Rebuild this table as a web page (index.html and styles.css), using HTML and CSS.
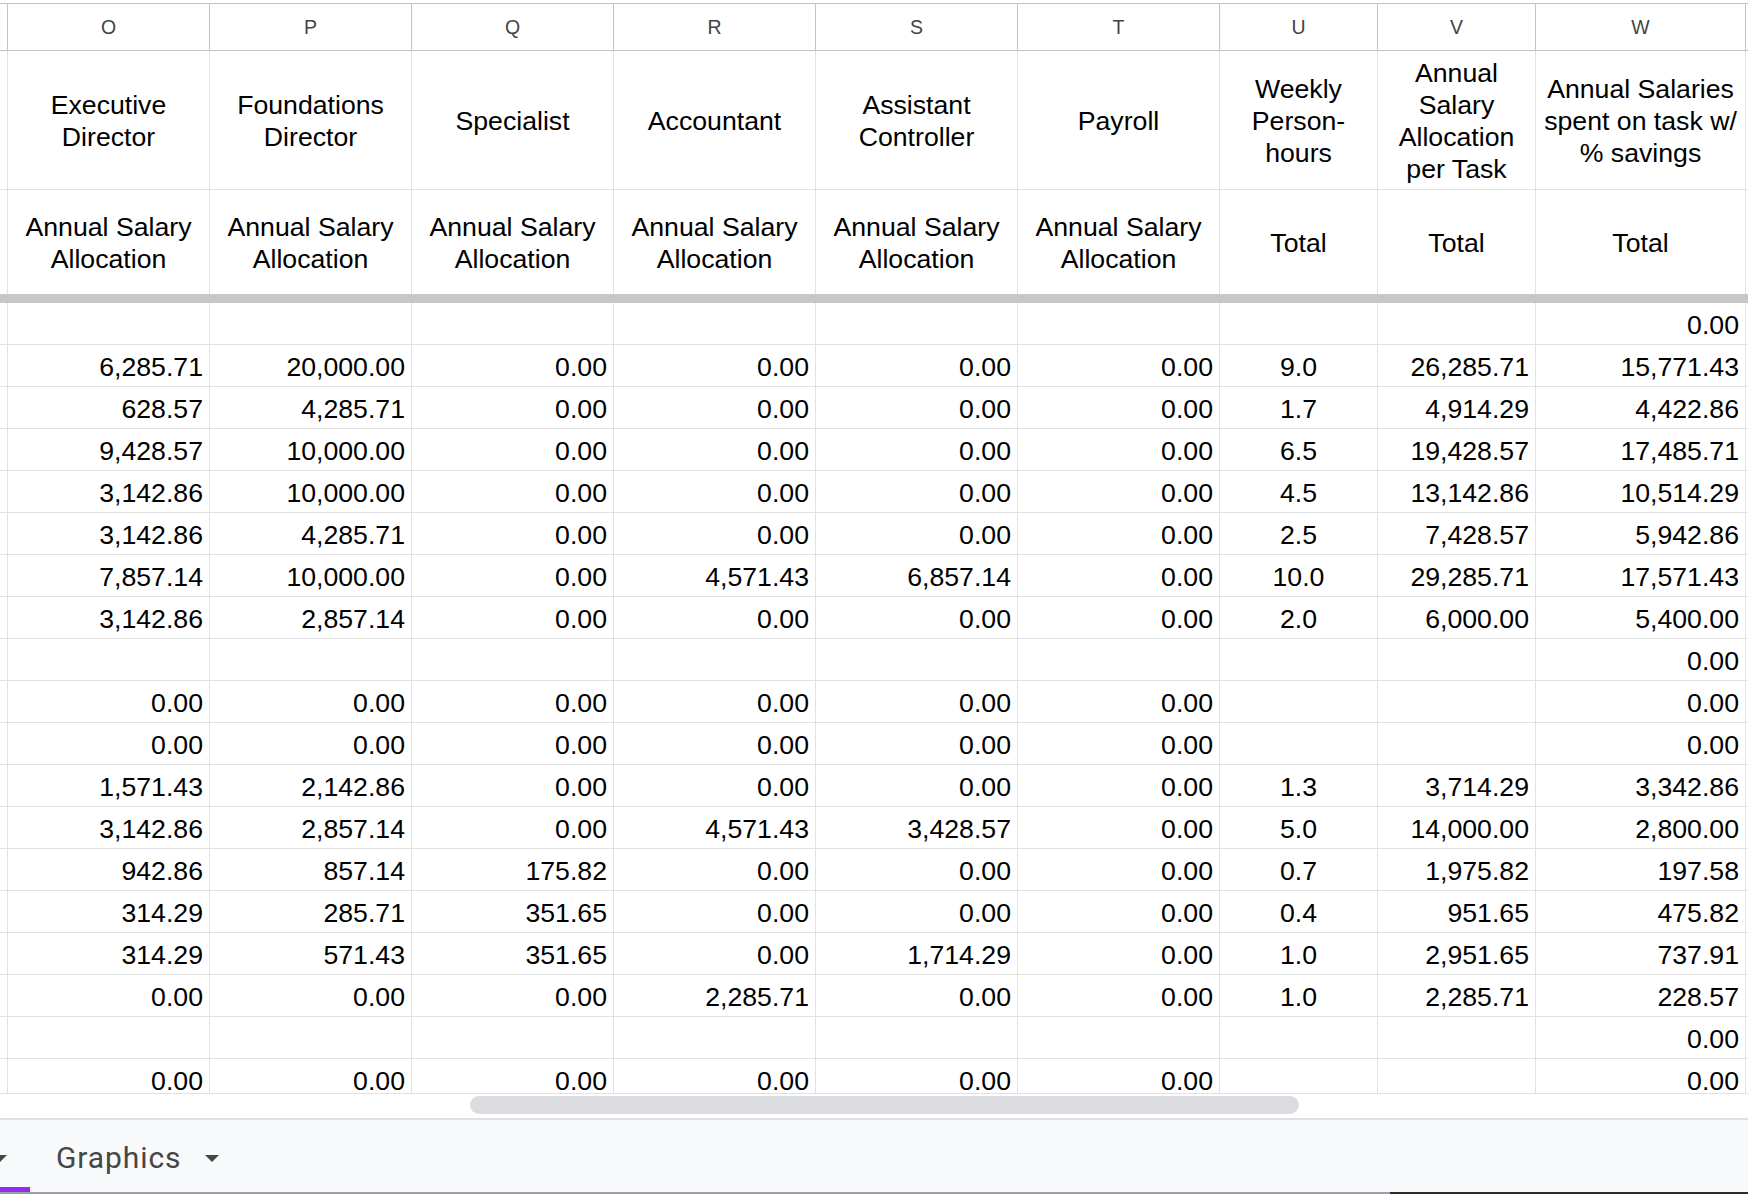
FILE: index.html
```html
<!DOCTYPE html>
<html>
<head>
<meta charset="utf-8">
<link rel="stylesheet" href="styles.css">
</head>
<body>
<div class="sheet">
  <div class="r letters">
    <div class="c"></div><div class="c">O</div><div class="c">P</div><div class="c">Q</div><div class="c">R</div><div class="c">S</div><div class="c">T</div><div class="c">U</div><div class="c">V</div><div class="c">W</div><div class="c last"></div>
  </div>
  <div class="r h1">
    <div class="c"></div>
    <div class="c">Executive Director</div>
    <div class="c">Foundations Director</div>
    <div class="c">Specialist</div>
    <div class="c">Accountant</div>
    <div class="c">Assistant Controller</div>
    <div class="c">Payroll</div>
    <div class="c">Weekly Person-hours</div>
    <div class="c">Annual Salary Allocation per Task</div>
    <div class="c">Annual Salaries spent on task w/ % savings</div>
    <div class="c last"></div>
  </div>
  <div class="r h2">
    <div class="c"></div>
    <div class="c">Annual Salary Allocation</div>
    <div class="c">Annual Salary Allocation</div>
    <div class="c">Annual Salary Allocation</div>
    <div class="c">Annual Salary Allocation</div>
    <div class="c">Annual Salary Allocation</div>
    <div class="c">Annual Salary Allocation</div>
    <div class="c">Total</div>
    <div class="c">Total</div>
    <div class="c">Total</div>
    <div class="c last"></div>
  </div>
  <div class="freeze"></div>

  <div class="r d"><div class="c"></div><div class="c"></div><div class="c"></div><div class="c"></div><div class="c"></div><div class="c"></div><div class="c"></div><div class="c u"></div><div class="c"></div><div class="c">0.00</div><div class="c last"></div></div>
  <div class="r d"><div class="c"></div><div class="c">6,285.71</div><div class="c">20,000.00</div><div class="c">0.00</div><div class="c">0.00</div><div class="c">0.00</div><div class="c">0.00</div><div class="c u">9.0</div><div class="c">26,285.71</div><div class="c">15,771.43</div><div class="c last"></div></div>
  <div class="r d"><div class="c"></div><div class="c">628.57</div><div class="c">4,285.71</div><div class="c">0.00</div><div class="c">0.00</div><div class="c">0.00</div><div class="c">0.00</div><div class="c u">1.7</div><div class="c">4,914.29</div><div class="c">4,422.86</div><div class="c last"></div></div>
  <div class="r d"><div class="c"></div><div class="c">9,428.57</div><div class="c">10,000.00</div><div class="c">0.00</div><div class="c">0.00</div><div class="c">0.00</div><div class="c">0.00</div><div class="c u">6.5</div><div class="c">19,428.57</div><div class="c">17,485.71</div><div class="c last"></div></div>
  <div class="r d"><div class="c"></div><div class="c">3,142.86</div><div class="c">10,000.00</div><div class="c">0.00</div><div class="c">0.00</div><div class="c">0.00</div><div class="c">0.00</div><div class="c u">4.5</div><div class="c">13,142.86</div><div class="c">10,514.29</div><div class="c last"></div></div>
  <div class="r d"><div class="c"></div><div class="c">3,142.86</div><div class="c">4,285.71</div><div class="c">0.00</div><div class="c">0.00</div><div class="c">0.00</div><div class="c">0.00</div><div class="c u">2.5</div><div class="c">7,428.57</div><div class="c">5,942.86</div><div class="c last"></div></div>
  <div class="r d"><div class="c"></div><div class="c">7,857.14</div><div class="c">10,000.00</div><div class="c">0.00</div><div class="c">4,571.43</div><div class="c">6,857.14</div><div class="c">0.00</div><div class="c u">10.0</div><div class="c">29,285.71</div><div class="c">17,571.43</div><div class="c last"></div></div>
  <div class="r d"><div class="c"></div><div class="c">3,142.86</div><div class="c">2,857.14</div><div class="c">0.00</div><div class="c">0.00</div><div class="c">0.00</div><div class="c">0.00</div><div class="c u">2.0</div><div class="c">6,000.00</div><div class="c">5,400.00</div><div class="c last"></div></div>
  <div class="r d"><div class="c"></div><div class="c"></div><div class="c"></div><div class="c"></div><div class="c"></div><div class="c"></div><div class="c"></div><div class="c u"></div><div class="c"></div><div class="c">0.00</div><div class="c last"></div></div>
  <div class="r d"><div class="c"></div><div class="c">0.00</div><div class="c">0.00</div><div class="c">0.00</div><div class="c">0.00</div><div class="c">0.00</div><div class="c">0.00</div><div class="c u"></div><div class="c"></div><div class="c">0.00</div><div class="c last"></div></div>
  <div class="r d"><div class="c"></div><div class="c">0.00</div><div class="c">0.00</div><div class="c">0.00</div><div class="c">0.00</div><div class="c">0.00</div><div class="c">0.00</div><div class="c u"></div><div class="c"></div><div class="c">0.00</div><div class="c last"></div></div>
  <div class="r d"><div class="c"></div><div class="c">1,571.43</div><div class="c">2,142.86</div><div class="c">0.00</div><div class="c">0.00</div><div class="c">0.00</div><div class="c">0.00</div><div class="c u">1.3</div><div class="c">3,714.29</div><div class="c">3,342.86</div><div class="c last"></div></div>
  <div class="r d"><div class="c"></div><div class="c">3,142.86</div><div class="c">2,857.14</div><div class="c">0.00</div><div class="c">4,571.43</div><div class="c">3,428.57</div><div class="c">0.00</div><div class="c u">5.0</div><div class="c">14,000.00</div><div class="c">2,800.00</div><div class="c last"></div></div>
  <div class="r d"><div class="c"></div><div class="c">942.86</div><div class="c">857.14</div><div class="c">175.82</div><div class="c">0.00</div><div class="c">0.00</div><div class="c">0.00</div><div class="c u">0.7</div><div class="c">1,975.82</div><div class="c">197.58</div><div class="c last"></div></div>
  <div class="r d"><div class="c"></div><div class="c">314.29</div><div class="c">285.71</div><div class="c">351.65</div><div class="c">0.00</div><div class="c">0.00</div><div class="c">0.00</div><div class="c u">0.4</div><div class="c">951.65</div><div class="c">475.82</div><div class="c last"></div></div>
  <div class="r d"><div class="c"></div><div class="c">314.29</div><div class="c">571.43</div><div class="c">351.65</div><div class="c">0.00</div><div class="c">1,714.29</div><div class="c">0.00</div><div class="c u">1.0</div><div class="c">2,951.65</div><div class="c">737.91</div><div class="c last"></div></div>
  <div class="r d"><div class="c"></div><div class="c">0.00</div><div class="c">0.00</div><div class="c">0.00</div><div class="c">2,285.71</div><div class="c">0.00</div><div class="c">0.00</div><div class="c u">1.0</div><div class="c">2,285.71</div><div class="c">228.57</div><div class="c last"></div></div>
  <div class="r d"><div class="c"></div><div class="c"></div><div class="c"></div><div class="c"></div><div class="c"></div><div class="c"></div><div class="c"></div><div class="c u"></div><div class="c"></div><div class="c">0.00</div><div class="c last"></div></div>
  <div class="r d"><div class="c"></div><div class="c">0.00</div><div class="c">0.00</div><div class="c">0.00</div><div class="c">0.00</div><div class="c">0.00</div><div class="c">0.00</div><div class="c u"></div><div class="c"></div><div class="c">0.00</div><div class="c last"></div></div>
</div>
<div class="hscroll"><div class="thumb"></div></div>
<div class="tabbar">
  <div class="tab-prev">
    <svg class="arrow-prev" width="7" height="7" viewBox="0 0 7 7"><polygon points="-7,0 7,0 0,7" fill="#444746"/></svg>
  </div>
  <div class="tab">
    <span class="tab-label">Graphics</span>
    <svg class="arrow" width="14" height="7" viewBox="0 0 14 7"><polygon points="0,0 14,0 7,7" fill="#444746"/></svg>
  </div>
</div>
<div class="bottomline"><div class="bl-a"></div><div class="bl-b"></div></div>
</body>
</html>
```

FILE: styles.css
```css
html, body {
  margin: 0;
  padding: 0;
  background: #ffffff;
}
body {
  width: 1748px;
  height: 1194px;
  overflow: hidden;
  font-family: "Liberation Sans", Arial, sans-serif;
  color: #000000;
}
.sheet {
  padding-top: 3px;
  height: 1090px;
  overflow: hidden;
  border-bottom: 1px solid #e2e2e2;
}
.r {
  display: grid;
  grid-template-columns: 8px repeat(6, 202px) 158px 158px 210px 1fr;
}
.c {
  box-sizing: border-box;
  border-right: 1px solid #e2e2e2;
  border-bottom: 1px solid #e2e2e2;
  overflow: hidden;
  white-space: nowrap;
}
.c.last {
  border-right: none;
}
.letters {
  border-top: 1px solid #c4c4c4;
}
.letters .c {
  height: 47px;
  padding-top: 1px;
  border-right-color: #c4c4c4;
  border-bottom-color: #c4c4c4;
  font-size: 19.5px;
  line-height: 45px;
  text-align: center;
  color: #444444;
}
.h1 .c,
.h2 .c {
  display: flex;
  align-items: center;
  justify-content: center;
  text-align: center;
  white-space: normal;
  font-size: 26.67px;
  line-height: 32px;
  padding: 2px 6px 0 6px;
}
.h1 .c:first-child,
.h2 .c:first-child,
.h1 .c.last,
.h2 .c.last {
  padding: 0;
}
.h1 .c {
  height: 139px;
}
.h2 .c {
  height: 104px;
  border-bottom: none;
}
.freeze {
  height: 9px;
  background: #c7c7c7;
}
.d .c {
  height: 42px;
  font-size: 26.67px;
  line-height: 40px;
  padding: 2px 6px 0 6px;
  text-align: right;
}
.d .c:first-child,
.d .c.last {
  padding: 0;
}
.d .c.u {
  text-align: center;
}
.hscroll {
  height: 22px;
  padding: 2px 0 0 470px;
  border-bottom: 2px solid #e0e0e0;
}
.thumb {
  width: 829px;
  height: 18px;
  border-radius: 9px;
  background: #dadce0;
}
.tabbar {
  height: 72px;
  background: #f8f9fa;
  display: flex;
  align-items: stretch;
}
.tab-prev {
  width: 30px;
  box-sizing: border-box;
  border-bottom: 5px solid #8f2df2;
  padding-top: 35px;
}
.arrow-prev {
  display: block;
}
.tab {
  display: flex;
  align-items: flex-start;
  padding-left: 26px;
}
.tab-label {
  font-family: Roboto, "Noto Sans", sans-serif;
  font-weight: 400;
  font-size: 30px;
  line-height: 34px;
  padding-top: 21px;
  color: #444746;
  letter-spacing: 0.9px;
}
.arrow {
  display: block;
  margin-top: 35px;
  margin-left: 24px;
}
.bottomline {
  display: flex;
  height: 2px;
}
.bl-a {
  width: 1390px;
  background: #9aa0a6;
}
.bl-b {
  flex: 1;
  background: #2b2b2b;
}
```
